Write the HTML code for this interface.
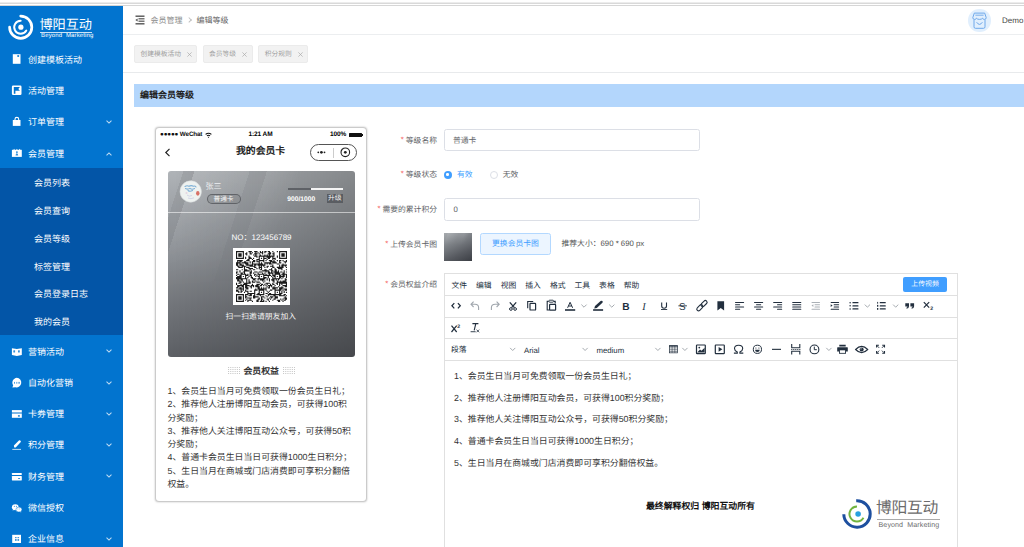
<!DOCTYPE html>
<html lang="zh-CN"><head><meta charset="utf-8">
<style>
*{margin:0;padding:0;box-sizing:border-box}
html,body{width:1024px;height:547px;overflow:hidden;background:#fff;font-family:"Liberation Sans",sans-serif;color:#333;text-rendering:geometricPrecision}
.a{position:absolute}
.top{position:absolute;left:0;top:0;width:1024px;height:6px;background:#fff}
.top .l1{position:absolute;left:0;top:2px;width:1024px;height:1px;background:#ececec}
.top .l2{position:absolute;left:0;top:3px;width:1024px;height:1px;background:#d9d9d9}
.top .l3{position:absolute;left:0;top:5px;width:1024px;height:1px;background:#d6d6d6}
.side{position:absolute;left:0;top:6px;width:123px;height:541px;background:#0274cf;color:#fff}
.mi{position:absolute;left:0;width:123px;height:31.3px;font-size:9px;line-height:31.3px}
.mi .t{position:absolute;left:28px;top:0}
.mi .ic{position:absolute;left:12px}
.mi .ch{position:absolute;left:106.5px;top:11.8px;width:4px;height:4px;border-right:1px solid rgba(255,255,255,.75);border-bottom:1px solid rgba(255,255,255,.75);transform:rotate(45deg)}
.mi .ch.up{transform:rotate(-135deg);top:14px}
.sub{position:absolute;left:0;top:162.2px;width:123px;height:166.8px;background:#0355a7}
.si{position:absolute;left:34px;margin-top:2px;font-size:9px;line-height:27.8px;height:27.8px}
.hdr{position:absolute;left:123px;top:6px;width:901px;height:29px;border-bottom:1px solid #eceef0}
.tags{position:absolute;left:123px;top:35px;width:901px;height:38px;border-bottom:1px solid #e8eaec}
.tag{position:absolute;top:10px;height:18px;background:#f2f2f2;border:1px solid #ebebeb;border-radius:2px;color:#9d9d9d;font-size:6.75px;line-height:16px}
.tag .x{position:absolute}
.title{position:absolute;left:134px;top:84px;width:890px;height:22.5px;background:#b3d6fc;font-size:9px;font-weight:bold;line-height:22.5px;padding-left:6px;color:#222}
.phone{position:absolute;left:156px;top:128px;width:210px;height:373px;background:#fff;border-radius:3px;box-shadow:0 0 2px 0.5px rgba(0,0,0,.28)}
.card{position:absolute;left:11.5px;top:42.5px;width:187.2px;height:186px;border-radius:3px;overflow:hidden;background:linear-gradient(to right,rgba(0,0,0,0) 0%,rgba(0,0,0,.24) 100%),linear-gradient(to bottom,#b0b4b8 0%,#8f9398 40%,#74777c 70%,#5c5f64 100%)}
.dots{width:11.5px;height:8px;background-image:radial-gradient(circle,#c8c8c8 0.5px,transparent 0.6px);background-size:2px 2px}
.lbl{position:absolute;right:587px;font-size:7.8px;line-height:9.5px;color:#606266;white-space:nowrap}
.lbl i{font-style:normal;color:#f56c6c;margin-right:2px;position:relative;top:-1px}
.inp{position:absolute;left:444.4px;width:255.6px;border:0.8px solid #dcdfe6;border-radius:2.5px;background:#fff}
.inp span{position:absolute;top:50%;transform:translateY(-42%);font-size:7.8px;line-height:9.5px;color:#606266}
.ed{position:absolute;left:444.3px;top:273.3px;width:514px;height:280px;border:0.8px solid #e0e0e0;background:#fff}
</style></head>
<body>
<div class="top"><div class="l1"></div><div class="l2"></div><div class="l3"></div></div>

<div class="side">
  <!-- logo -->
  <svg class="a" style="left:6px;top:6px" width="30" height="30" viewBox="0 0 30 30">
    <path d="M14.7 4.1 A11.1 11.1 0 1 1 3.6 15.2" fill="none" stroke="#fff" stroke-width="2.7" stroke-linecap="round"/>
    <path d="M14.7 8.7 A6.5 6.5 0 1 0 20.33 18.45" fill="none" stroke="#fff" stroke-width="1.9" stroke-linecap="round"/>
    <circle cx="14.9" cy="15.2" r="2.6" fill="#fff"/>
  </svg>
  <div class="a" style="left:39.5px;top:10.5px;font-size:13.2px;line-height:16px;letter-spacing:-0.1px;font-weight:300">博阳互动</div>
  <div class="a" style="left:40px;top:26px;width:52px;height:1px;background:rgba(255,255,255,.8)"></div>
  <div class="a" style="left:41px;top:27px;font-size:6px;line-height:7px;letter-spacing:0.15px">Beyond&nbsp; Marketing</div>

  <div class="mi" style="top:38.6px"><span class="t">创建模板活动</span></div>
  <div class="mi" style="top:69.9px"><span class="t">活动管理</span></div>
  <div class="mi" style="top:101.2px"><span class="t">订单管理</span><span class="ch"></span></div>
  <div class="mi" style="top:132.5px"><span class="t">会员管理</span><span class="ch up"></span></div>
  <div class="sub">
    <div class="si" style="top:0">会员列表</div>
    <div class="si" style="top:27.8px">会员查询</div>
    <div class="si" style="top:55.6px">会员等级</div>
    <div class="si" style="top:83.4px">标签管理</div>
    <div class="si" style="top:111.2px">会员登录日志</div>
    <div class="si" style="top:139px">我的会员</div>
  </div>
  <div class="mi" style="top:330.5px"><span class="t">营销活动</span><span class="ch"></span></div>
  <div class="mi" style="top:361.77px"><span class="t">自动化营销</span><span class="ch"></span></div>
  <div class="mi" style="top:393.04px"><span class="t">卡券管理</span><span class="ch"></span></div>
  <div class="mi" style="top:424.31px"><span class="t">积分管理</span><span class="ch"></span></div>
  <div class="mi" style="top:455.58px"><span class="t">财务管理</span><span class="ch"></span></div>
  <div class="mi" style="top:486.85px"><span class="t">微信授权</span></div>
  <div class="mi" style="top:518.12px"><span class="t">企业信息</span><span class="ch"></span></div>
</div>

<svg class="a" style="left:0;top:0" width="30" height="547" viewBox="0 0 30 547">
<rect x="12.8" y="54.2" width="7.7" height="9.6" fill="#fff"/><rect x="17.3" y="54.9" width="1.8" height="2.1" rx="0.6" fill="#0274cf" opacity=".85"/>
<rect x="11.9" y="85.6" width="9.6" height="9.4" rx="1.2" fill="#fff"/><path d="M13.8 87.1 H19.9 L18.3 88.9 L19.9 90.7 H15.4 V93.8 H13.8 Z" fill="#0274cf"/>
<rect x="12.8" y="120" width="7.7" height="5.9" fill="#fff"/><path d="M15 120.2 V119.2 Q15 117.4 16.85 117.4 Q18.7 117.4 18.7 119.2 V120.2" fill="none" stroke="#fff" stroke-width="1.1"/>
<rect x="11.9" y="149.8" width="9.9" height="7.1" fill="#fff"/><path d="M13.4 150 L14.1 148.8 L14.8 150 M16.2 150 L16.9 148.8 L17.6 150 M19 150 L19.7 148.8 L20.4 150" fill="#fff"/><path d="M15.6 155.4 Q15.6 153.4 16.9 153.2 Q15.9 152.8 15.9 152 Q15.9 151.2 16.9 151.2 Q17.9 151.2 17.9 152 Q17.9 152.8 16.9 153.2 Q18.2 153.4 18.2 155.4 Z" fill="#0274cf" opacity=".8"/>
<path d="M11.9 348.2 L16.85 349 L21.8 348.2 V355.1 L16.85 355.9 L11.9 355.1 Z" fill="#fff"/><rect x="13.3" y="350.2" width="1.8" height="2.3" rx="0.5" fill="#0274cf" opacity=".8"/><rect x="18" y="350.2" width="1.8" height="2.3" rx="0.5" fill="#0274cf" opacity=".8"/>
<path d="M16.85 377.8 A4.9 4.8 0 1 1 15.5 387.3 L12.4 387.5 L13.2 385.3 A4.9 4.8 0 0 1 16.85 377.8 Z" fill="#fff"/><rect x="14" y="381.9" width="1" height="1.8" fill="#0274cf" opacity=".7"/><rect x="16.3" y="381.9" width="1" height="1.8" fill="#0274cf" opacity=".7"/><rect x="18.4" y="381.9" width="1.4" height="1.8" fill="#0274cf" opacity=".7"/>
<rect x="11.9" y="410.1" width="9.9" height="2.1" fill="#fff"/><rect x="11.9" y="412.2" width="9.9" height="1.6" fill="#fff" opacity=".45"/><rect x="11.9" y="413.8" width="9.9" height="4" fill="#fff"/><rect x="17.9" y="415" width="2" height="1.8" rx="0.6" fill="#0274cf" opacity=".8"/>
<path d="M14.2 447.6 L13.9 445.6 L18.9 440.6 Q19.6 440 20.2 440.6 L20.7 441.1 Q21.2 441.7 20.6 442.3 L15.7 447.4 Z" fill="#fff"/><rect x="12.3" y="448.9" width="8.7" height="0.9" fill="#fff" opacity=".85"/>
<rect x="11.9" y="473" width="9.9" height="2" rx="0.4" fill="#fff"/><rect x="11.9" y="476" width="9.9" height="4.5" rx="0.4" fill="#fff"/><rect x="18" y="477.9" width="2.2" height="1.2" rx="0.6" fill="#0274cf" opacity=".8"/>
<ellipse cx="15.3" cy="507.2" rx="3.4" ry="3" fill="#fff"/><path d="M13.2 509.2 L12.6 510.6 L14.6 509.8 Z" fill="#fff"/><ellipse cx="18.9" cy="509.6" rx="3" ry="2.5" fill="#fff" stroke="#0274cf" stroke-width="0.5"/><path d="M20.6 511.4 L21.3 512.4 L19.6 511.8 Z" fill="#fff"/><circle cx="14.3" cy="506.2" r="0.5" fill="#0274cf"/><circle cx="16.4" cy="506.2" r="0.5" fill="#0274cf"/><circle cx="17.9" cy="508.9" r="0.45" fill="#0274cf"/><circle cx="19.8" cy="508.9" r="0.45" fill="#0274cf"/>
<rect x="12.2" y="534.8" width="8.8" height="8.2" fill="#fff"/><g fill="#0274cf" opacity=".75"><rect x="15" y="537" width="1.6" height="1.1"/><rect x="17.5" y="537" width="1.6" height="1.1"/><rect x="15" y="538.9" width="1.6" height="2"/><rect x="17.5" y="538.9" width="1.6" height="2"/></g>
</svg>
<div class="hdr">
  <svg class="a" style="left:12px;top:8.5px" width="10" height="10" viewBox="0 0 10 10">
    <rect x="0.5" y="0.5" width="9" height="1.4" fill="#555"/>
    <rect x="3.5" y="3.2" width="6" height="1.2" fill="#555"/>
    <rect x="3.5" y="5.6" width="6" height="1.2" fill="#555"/>
    <rect x="0.5" y="8.1" width="9" height="1.4" fill="#555"/>
    <path d="M0.3 5 L2.6 3.4 L2.6 6.6 Z" fill="#555"/>
  </svg>
  <div class="a" style="left:27.5px;top:9.7px;font-size:8px;line-height:10px;color:#8a8a8a">会员管理</div>
  <div class="a" style="left:63.5px;top:11.6px;width:4.2px;height:4.2px;border-right:0.9px solid #c0c0c0;border-top:0.9px solid #c0c0c0;transform:rotate(45deg)"></div>
  <div class="a" style="left:73.5px;top:9.7px;font-size:8px;line-height:10px;color:#606060">编辑等级</div>
  <div class="a" style="left:845px;top:3px;width:22.5px;height:22.5px;border-radius:50%;background:#e1effd"></div>
  <svg class="a" style="left:849px;top:5.5px" width="15" height="17" viewBox="0 0 15 17">
    <path d="M2.3 1.1 H12.7 L14.2 5.6 Q14.2 7.4 12.5 7.4 Q10.8 7.4 10.4 6.2 Q9.8 7.4 7.5 7.4 Q5.2 7.4 4.6 6.2 Q4.2 7.4 2.5 7.4 Q0.8 7.4 0.8 5.6 Z" fill="none" stroke="#6ea8ea" stroke-width="1"/>
    <path d="M3.4 3.2 H11.6" stroke="#6ea8ea" stroke-width="0.9"/>
    <path d="M2 7.6 V14.8 Q2 16.3 3.4 16.3 H11.6 Q13 16.3 13 14.8 V7.6" fill="none" stroke="#6ea8ea" stroke-width="1"/>
    <path d="M4.6 10.2 Q7.5 14.6 10.4 10.2" fill="none" stroke="#6ea8ea" stroke-width="1"/>
  </svg>
  <div class="a" style="left:879px;top:9.8px;font-size:8px;line-height:10px;color:#444">Demo</div>
</div>
<div class="tags">
  <div class="tag" style="left:11px;width:63px"><span class="a" style="left:5.4px;top:1.2px">创建模板活动</span><svg class="x" style="left:52.3px;top:5.6px" width="5" height="5" viewBox="0 0 5 5"><path d="M0.4 0.4 L4.6 4.6 M4.6 0.4 L0.4 4.6" stroke="#aaa" stroke-width="0.7"/></svg></div>
  <div class="tag" style="left:79.7px;width:50.5px"><span class="a" style="left:5.4px;top:1.2px">会员等级</span><svg class="x" style="left:38.8px;top:5.6px" width="5" height="5" viewBox="0 0 5 5"><path d="M0.4 0.4 L4.6 4.6 M4.6 0.4 L0.4 4.6" stroke="#aaa" stroke-width="0.7"/></svg></div>
  <div class="tag" style="left:135.4px;width:50px"><span class="a" style="left:5.4px;top:1.2px">积分规则</span><svg class="x" style="left:38.6px;top:5.6px" width="5" height="5" viewBox="0 0 5 5"><path d="M0.4 0.4 L4.6 4.6 M4.6 0.4 L0.4 4.6" stroke="#aaa" stroke-width="0.7"/></svg></div>
</div>
<div class="title">编辑会员等级</div>

<div class="phone">
  <div class="a" style="left:4px;top:3px;font-size:6.3px;line-height:8px;color:#111;letter-spacing:-0.15px;font-weight:bold">●●●●● WeChat</div>
  <svg class="a" style="left:49px;top:4px" width="7" height="6" viewBox="0 0 7 6"><path d="M0.2 2 Q3.5 -0.6 6.8 2 L6 2.8 Q3.5 0.8 1 2.8Z M1.6 3.4 Q3.5 1.9 5.4 3.4 L4.6 4.2 Q3.5 3.3 2.4 4.2Z M3.5 6 L2.8 5 Q3.5 4.4 4.2 5Z" fill="#111"/></svg>
  <div class="a" style="left:92.5px;top:3px;font-size:6.5px;line-height:8px;color:#000;font-weight:bold;letter-spacing:-0.1px">1:21 AM</div>
  <div class="a" style="left:174px;top:3px;font-size:6.5px;line-height:8px;color:#000;font-weight:bold;letter-spacing:-0.1px">100%</div>
  <div class="a" style="left:193px;top:4.5px;width:13px;height:4.5px;background:#111;border-radius:0.5px"></div>
  <div class="a" style="left:206.3px;top:5.8px;width:0.8px;height:2px;background:#111"></div>
  <svg class="a" style="left:8px;top:20px" width="7" height="9" viewBox="0 0 7 9"><path d="M5.5 0.8 L1.8 4.5 L5.5 8.2" fill="none" stroke="#222" stroke-width="1.2"/></svg>
  <div class="a" style="left:80px;top:18px;font-size:9.9px;line-height:12px;color:#222;font-weight:bold;letter-spacing:-0.05px">我的会员卡</div>
  <div class="a" style="left:154px;top:16px;width:47px;height:16.5px;border:0.8px solid #555;border-radius:9px"></div>
  <div class="a" style="left:177.3px;top:19.5px;width:0.6px;height:10px;background:#ccc"></div>
  <svg class="a" style="left:154px;top:16px" width="47" height="17" viewBox="0 0 47 17">
  <circle cx="8.3" cy="8.3" r="0.9" fill="#222"/><circle cx="11.4" cy="8.3" r="1.35" fill="#222"/><circle cx="14.5" cy="8.3" r="0.9" fill="#222"/>
  <circle cx="35.3" cy="8.3" r="4.3" fill="none" stroke="#222" stroke-width="1.1"/><circle cx="35.3" cy="8.3" r="1.4" fill="#222"/>
</svg>

  <div class="card">
    <div class="a" style="left:0;top:0;width:100%;height:100%;background:linear-gradient(108deg,rgba(255,255,255,0) 0%,rgba(255,255,255,0) 6.2%,rgba(0,0,0,.07) 6.2%,rgba(0,0,0,.07) 10.7%,rgba(255,255,255,.10) 10.7%,rgba(255,255,255,.06) 33%,rgba(0,0,0,.02) 33%,rgba(0,0,0,.02) 40%,rgba(255,255,255,.07) 40%,rgba(255,255,255,0) 55%);-webkit-mask-image:linear-gradient(to bottom,#000 0%,rgba(0,0,0,.5) 35%,rgba(0,0,0,0) 65%)"></div>
    <svg class="a" style="left:11px;top:9.5px" width="24" height="24" viewBox="0 0 24 24">
  <circle cx="11.7" cy="11.5" r="10.7" fill="#eef2f0" stroke="#d9dcde" stroke-width="0.6"/>
  <path d="M6 6.5 Q8 5.2 10 6.3 Q12 5 14.5 6.2 Q16 5.5 17 7 M6.5 8.5 Q9 9.8 11 8.4 Q13 10 15.5 8.6 M9 10.5 Q11 12 13.5 10.6" fill="none" stroke="#7eb0d6" stroke-width="1.1" stroke-linecap="round"/>
  <ellipse cx="18.8" cy="13.3" rx="1.7" ry="2.4" fill="#d35b4e" opacity=".85"/>
  <path d="M8 15 Q10 17 13 15.5 M9 18 Q12 19.5 15 17.8" fill="none" stroke="#cfd3e6" stroke-width="0.9"/>
  <circle cx="7.5" cy="13" r="1" fill="#e3c8d8" opacity=".7"/>
</svg>
<div class="a" style="left:38px;top:11.5px;font-size:8px;line-height:9px;color:#eef0f2">张三</div>
    <div class="a" style="left:39px;top:23.4px;width:34px;height:10.6px;border-radius:6px;background:rgba(0,0,0,.07);border:0.9px solid rgba(80,83,88,.75);font-size:6.6px;line-height:9px;color:#f5f5f5;text-align:center">普通卡</div>
    <div class="a" style="left:120.5px;top:17px;width:23px;height:2px;background:#5e6166"></div>
    <div class="a" style="left:143.5px;top:17px;width:32px;height:2px;background:#f4f4f4"></div>
    <div class="a" style="left:119.8px;top:25px;font-size:6.7px;line-height:8px;color:#fff;font-weight:bold">900/1000</div>
    <div class="a" style="left:159px;top:23.3px;width:16.5px;height:9.7px;background:#5a5d62;font-size:6.8px;line-height:9.7px;color:#f5f5f5;text-align:center">升级</div>
    <div class="a" style="left:0;top:41.5px;width:100%;height:0.8px;background:rgba(255,255,255,.55)"></div>
    <div class="a" style="left:64px;top:62px;font-size:8px;line-height:9px;color:#fff">NO：123456789</div>
    <div class="a" style="left:65.2px;top:77.7px;width:57px;height:57px;background:#fff"></div>
    <svg class="a" style="left:68.2px;top:80.7px" width="51" height="51" viewBox="0 0 45 45"><path d="M0 0h7v1h-7zM11 0h3v1h-3zM16 0h3v1h-3zM21 0h1v1h-1zM23 0h1v1h-1zM25 0h2v1h-2zM28 0h2v1h-2zM32 0h1v1h-1zM36 0h1v1h-1zM38 0h7v1h-7zM0 1h1v1h-1zM6 1h1v1h-1zM9 1h1v1h-1zM12 1h1v1h-1zM14 1h1v1h-1zM17 1h1v1h-1zM19 1h1v1h-1zM21 1h3v1h-3zM25 1h1v1h-1zM29 1h2v1h-2zM33 1h1v1h-1zM38 1h1v1h-1zM44 1h1v1h-1zM0 2h1v1h-1zM2 2h3v1h-3zM6 2h1v1h-1zM8 2h2v1h-2zM12 2h2v1h-2zM16 2h3v1h-3zM20 2h1v1h-1zM23 2h1v1h-1zM28 2h3v1h-3zM32 2h2v1h-2zM38 2h1v1h-1zM40 2h3v1h-3zM44 2h1v1h-1zM0 3h1v1h-1zM2 3h3v1h-3zM6 3h1v1h-1zM9 3h1v1h-1zM15 3h1v1h-1zM17 3h1v1h-1zM21 3h1v1h-1zM25 3h1v1h-1zM27 3h1v1h-1zM29 3h1v1h-1zM33 3h1v1h-1zM38 3h1v1h-1zM40 3h3v1h-3zM44 3h1v1h-1zM0 4h1v1h-1zM2 4h3v1h-3zM6 4h1v1h-1zM11 4h1v1h-1zM16 4h3v1h-3zM20 4h14v1h-14zM36 4h1v1h-1zM38 4h1v1h-1zM40 4h3v1h-3zM44 4h1v1h-1zM0 5h1v1h-1zM6 5h1v1h-1zM8 5h1v1h-1zM11 5h2v1h-2zM18 5h1v1h-1zM20 5h1v1h-1zM24 5h1v1h-1zM27 5h4v1h-4zM32 5h1v1h-1zM36 5h1v1h-1zM38 5h1v1h-1zM44 5h1v1h-1zM0 6h7v1h-7zM8 6h1v1h-1zM11 6h3v1h-3zM15 6h1v1h-1zM20 6h1v1h-1zM22 6h1v1h-1zM24 6h3v1h-3zM28 6h2v1h-2zM32 6h3v1h-3zM38 6h7v1h-7zM10 7h2v1h-2zM14 7h1v1h-1zM18 7h3v1h-3zM24 7h1v1h-1zM27 7h1v1h-1zM32 7h1v1h-1zM34 7h1v1h-1zM1 8h5v1h-5zM9 8h3v1h-3zM15 8h2v1h-2zM18 8h1v1h-1zM20 8h5v1h-5zM26 8h1v1h-1zM29 8h3v1h-3zM33 8h1v1h-1zM36 8h1v1h-1zM38 8h2v1h-2zM41 8h1v1h-1zM44 8h1v1h-1zM1 9h1v1h-1zM3 9h2v1h-2zM7 9h2v1h-2zM12 9h1v1h-1zM14 9h3v1h-3zM18 9h3v1h-3zM24 9h1v1h-1zM30 9h5v1h-5zM38 9h1v1h-1zM42 9h3v1h-3zM0 10h4v1h-4zM5 10h6v1h-6zM12 10h1v1h-1zM14 10h1v1h-1zM20 10h1v1h-1zM22 10h1v1h-1zM25 10h6v1h-6zM32 10h4v1h-4zM38 10h2v1h-2zM43 10h1v1h-1zM0 11h2v1h-2zM3 11h2v1h-2zM8 11h3v1h-3zM14 11h10v1h-10zM25 11h1v1h-1zM27 11h1v1h-1zM29 11h3v1h-3zM36 11h2v1h-2zM41 11h1v1h-1zM0 12h2v1h-2zM3 12h4v1h-4zM9 12h6v1h-6zM16 12h2v1h-2zM19 12h7v1h-7zM32 12h1v1h-1zM38 12h1v1h-1zM40 12h5v1h-5zM1 13h2v1h-2zM5 13h4v1h-4zM12 13h5v1h-5zM20 13h1v1h-1zM22 13h1v1h-1zM24 13h1v1h-1zM27 13h2v1h-2zM30 13h3v1h-3zM38 13h1v1h-1zM40 13h2v1h-2zM43 13h1v1h-1zM2 14h4v1h-4zM7 14h1v1h-1zM9 14h3v1h-3zM16 14h2v1h-2zM20 14h3v1h-3zM25 14h1v1h-1zM27 14h1v1h-1zM32 14h2v1h-2zM36 14h6v1h-6zM44 14h1v1h-1zM7 15h1v1h-1zM11 15h4v1h-4zM18 15h1v1h-1zM20 15h1v1h-1zM22 15h1v1h-1zM31 15h1v1h-1zM34 15h1v1h-1zM37 15h4v1h-4zM0 16h2v1h-2zM5 16h1v1h-1zM7 16h3v1h-3zM12 16h1v1h-1zM15 16h2v1h-2zM21 16h2v1h-2zM25 16h2v1h-2zM29 16h3v1h-3zM34 16h2v1h-2zM40 16h1v1h-1zM44 16h1v1h-1zM3 17h1v1h-1zM7 17h5v1h-5zM13 17h1v1h-1zM23 17h6v1h-6zM31 17h2v1h-2zM34 17h2v1h-2zM37 17h1v1h-1zM42 17h1v1h-1zM0 18h2v1h-2zM3 18h1v1h-1zM6 18h2v1h-2zM12 18h2v1h-2zM16 18h3v1h-3zM20 18h3v1h-3zM26 18h1v1h-1zM28 18h2v1h-2zM31 18h1v1h-1zM33 18h5v1h-5zM39 18h2v1h-2zM42 18h1v1h-1zM44 18h1v1h-1zM0 19h1v1h-1zM4 19h2v1h-2zM7 19h1v1h-1zM12 19h2v1h-2zM15 19h1v1h-1zM19 19h1v1h-1zM23 19h1v1h-1zM25 19h1v1h-1zM28 19h5v1h-5zM34 19h5v1h-5zM41 19h2v1h-2zM1 20h2v1h-2zM4 20h5v1h-5zM10 20h1v1h-1zM12 20h1v1h-1zM16 20h2v1h-2zM19 20h6v1h-6zM26 20h1v1h-1zM29 20h1v1h-1zM32 20h1v1h-1zM34 20h5v1h-5zM40 20h5v1h-5zM0 21h1v1h-1zM3 21h2v1h-2zM8 21h3v1h-3zM12 21h2v1h-2zM16 21h1v1h-1zM18 21h1v1h-1zM20 21h1v1h-1zM24 21h7v1h-7zM32 21h3v1h-3zM38 21h2v1h-2zM41 21h2v1h-2zM44 21h1v1h-1zM1 22h4v1h-4zM6 22h1v1h-1zM8 22h1v1h-1zM11 22h1v1h-1zM13 22h1v1h-1zM17 22h1v1h-1zM19 22h2v1h-2zM22 22h1v1h-1zM24 22h1v1h-1zM28 22h1v1h-1zM31 22h1v1h-1zM33 22h2v1h-2zM36 22h1v1h-1zM38 22h5v1h-5zM44 22h1v1h-1zM0 23h5v1h-5zM8 23h1v1h-1zM10 23h1v1h-1zM13 23h2v1h-2zM20 23h1v1h-1zM24 23h3v1h-3zM28 23h1v1h-1zM32 23h1v1h-1zM34 23h1v1h-1zM38 23h2v1h-2zM41 23h1v1h-1zM44 23h1v1h-1zM0 24h10v1h-10zM14 24h4v1h-4zM19 24h7v1h-7zM27 24h1v1h-1zM29 24h1v1h-1zM32 24h7v1h-7zM40 24h1v1h-1zM43 24h1v1h-1zM1 25h2v1h-2zM4 25h2v1h-2zM9 25h1v1h-1zM11 25h1v1h-1zM15 25h2v1h-2zM19 25h1v1h-1zM21 25h4v1h-4zM27 25h1v1h-1zM29 25h1v1h-1zM31 25h3v1h-3zM35 25h1v1h-1zM37 25h1v1h-1zM43 25h2v1h-2zM1 26h3v1h-3zM5 26h1v1h-1zM9 26h1v1h-1zM11 26h1v1h-1zM14 26h1v1h-1zM17 26h1v1h-1zM23 26h1v1h-1zM25 26h1v1h-1zM29 26h1v1h-1zM32 26h2v1h-2zM36 26h1v1h-1zM39 26h1v1h-1zM41 26h3v1h-3zM3 27h2v1h-2zM6 27h1v1h-1zM9 27h1v1h-1zM11 27h2v1h-2zM14 27h3v1h-3zM18 27h3v1h-3zM24 27h1v1h-1zM33 27h1v1h-1zM36 27h9v1h-9zM0 28h1v1h-1zM2 28h2v1h-2zM7 28h6v1h-6zM21 28h1v1h-1zM26 28h4v1h-4zM32 28h1v1h-1zM35 28h2v1h-2zM38 28h7v1h-7zM0 29h1v1h-1zM4 29h1v1h-1zM6 29h4v1h-4zM14 29h1v1h-1zM18 29h3v1h-3zM22 29h2v1h-2zM25 29h1v1h-1zM27 29h1v1h-1zM30 29h1v1h-1zM32 29h2v1h-2zM36 29h1v1h-1zM38 29h1v1h-1zM40 29h1v1h-1zM44 29h1v1h-1zM1 30h6v1h-6zM8 30h4v1h-4zM13 30h3v1h-3zM17 30h3v1h-3zM21 30h2v1h-2zM24 30h1v1h-1zM26 30h1v1h-1zM28 30h4v1h-4zM34 30h1v1h-1zM38 30h1v1h-1zM41 30h4v1h-4zM1 31h2v1h-2zM5 31h2v1h-2zM8 31h2v1h-2zM12 31h2v1h-2zM15 31h1v1h-1zM17 31h4v1h-4zM27 31h1v1h-1zM29 31h1v1h-1zM31 31h1v1h-1zM33 31h1v1h-1zM37 31h1v1h-1zM40 31h1v1h-1zM43 31h2v1h-2zM0 32h2v1h-2zM3 32h2v1h-2zM6 32h1v1h-1zM8 32h3v1h-3zM13 32h1v1h-1zM19 32h2v1h-2zM22 32h1v1h-1zM24 32h1v1h-1zM26 32h1v1h-1zM28 32h2v1h-2zM32 32h5v1h-5zM38 32h4v1h-4zM2 33h5v1h-5zM9 33h2v1h-2zM17 33h1v1h-1zM19 33h8v1h-8zM32 33h3v1h-3zM38 33h3v1h-3zM42 33h3v1h-3zM0 34h2v1h-2zM4 34h1v1h-1zM6 34h1v1h-1zM8 34h1v1h-1zM16 34h3v1h-3zM20 34h5v1h-5zM26 34h1v1h-1zM30 34h2v1h-2zM34 34h6v1h-6zM41 34h1v1h-1zM43 34h2v1h-2zM0 35h3v1h-3zM4 35h2v1h-2zM8 35h3v1h-3zM12 35h2v1h-2zM16 35h1v1h-1zM20 35h1v1h-1zM24 35h1v1h-1zM27 35h1v1h-1zM29 35h1v1h-1zM34 35h1v1h-1zM38 35h1v1h-1zM40 35h1v1h-1zM42 35h1v1h-1zM2 36h1v1h-1zM4 36h1v1h-1zM7 36h1v1h-1zM10 36h1v1h-1zM16 36h1v1h-1zM20 36h1v1h-1zM22 36h1v1h-1zM24 36h1v1h-1zM28 36h1v1h-1zM34 36h1v1h-1zM36 36h1v1h-1zM38 36h1v1h-1zM40 36h1v1h-1zM42 36h1v1h-1zM44 36h1v1h-1zM10 37h7v1h-7zM19 37h2v1h-2zM24 37h1v1h-1zM26 37h2v1h-2zM29 37h2v1h-2zM34 37h1v1h-1zM38 37h3v1h-3zM0 38h7v1h-7zM8 38h3v1h-3zM12 38h2v1h-2zM16 38h1v1h-1zM18 38h7v1h-7zM28 38h12v1h-12zM42 38h2v1h-2zM0 39h1v1h-1zM6 39h1v1h-1zM8 39h1v1h-1zM11 39h3v1h-3zM15 39h2v1h-2zM21 39h1v1h-1zM26 39h1v1h-1zM28 39h1v1h-1zM33 39h2v1h-2zM38 39h5v1h-5zM44 39h1v1h-1zM0 40h1v1h-1zM2 40h3v1h-3zM6 40h1v1h-1zM8 40h2v1h-2zM15 40h5v1h-5zM22 40h3v1h-3zM27 40h1v1h-1zM30 40h3v1h-3zM34 40h3v1h-3zM43 40h1v1h-1zM0 41h1v1h-1zM2 41h3v1h-3zM6 41h1v1h-1zM8 41h1v1h-1zM10 41h4v1h-4zM15 41h2v1h-2zM20 41h1v1h-1zM22 41h1v1h-1zM25 41h1v1h-1zM29 41h1v1h-1zM31 41h1v1h-1zM34 41h3v1h-3zM42 41h3v1h-3zM0 42h1v1h-1zM2 42h3v1h-3zM6 42h1v1h-1zM9 42h1v1h-1zM12 42h1v1h-1zM19 42h2v1h-2zM22 42h2v1h-2zM27 42h2v1h-2zM30 42h1v1h-1zM33 42h2v1h-2zM39 42h1v1h-1zM41 42h1v1h-1zM43 42h2v1h-2zM0 43h1v1h-1zM6 43h1v1h-1zM8 43h1v1h-1zM10 43h4v1h-4zM18 43h2v1h-2zM22 43h1v1h-1zM24 43h1v1h-1zM28 43h1v1h-1zM32 43h1v1h-1zM36 43h3v1h-3zM40 43h1v1h-1zM42 43h2v1h-2zM0 44h7v1h-7zM10 44h1v1h-1zM14 44h1v1h-1zM18 44h2v1h-2zM21 44h4v1h-4zM26 44h1v1h-1zM29 44h1v1h-1zM37 44h2v1h-2zM41 44h1v1h-1z" fill="#1a1a1a"/></svg>
    <div class="a" style="left:58px;top:141.3px;font-size:7.8px;line-height:9px;color:#f3f3f3;letter-spacing:0.05px">扫一扫邀请朋友加入</div>
  </div>
  <svg class="a" style="left:72px;top:239px" width="12" height="8" viewBox="0 0 12 8"><rect x="0.0" y="0" width="1.1" height="1" fill="#c9c9c9"/><rect x="0.0" y="2" width="1.1" height="1" fill="#c9c9c9"/><rect x="0.0" y="4" width="1.1" height="1" fill="#c9c9c9"/><rect x="0.0" y="6" width="1.1" height="1" fill="#c9c9c9"/><rect x="2.2" y="0" width="1.1" height="1" fill="#c9c9c9"/><rect x="2.2" y="2" width="1.1" height="1" fill="#c9c9c9"/><rect x="2.2" y="4" width="1.1" height="1" fill="#c9c9c9"/><rect x="2.2" y="6" width="1.1" height="1" fill="#c9c9c9"/><rect x="4.4" y="0" width="1.1" height="1" fill="#c9c9c9"/><rect x="4.4" y="2" width="1.1" height="1" fill="#c9c9c9"/><rect x="4.4" y="4" width="1.1" height="1" fill="#c9c9c9"/><rect x="4.4" y="6" width="1.1" height="1" fill="#c9c9c9"/><rect x="6.6000000000000005" y="0" width="1.1" height="1" fill="#c9c9c9"/><rect x="6.6000000000000005" y="2" width="1.1" height="1" fill="#c9c9c9"/><rect x="6.6000000000000005" y="4" width="1.1" height="1" fill="#c9c9c9"/><rect x="6.6000000000000005" y="6" width="1.1" height="1" fill="#c9c9c9"/><rect x="8.8" y="0" width="1.1" height="1" fill="#c9c9c9"/><rect x="8.8" y="2" width="1.1" height="1" fill="#c9c9c9"/><rect x="8.8" y="4" width="1.1" height="1" fill="#c9c9c9"/><rect x="8.8" y="6" width="1.1" height="1" fill="#c9c9c9"/><rect x="11.0" y="0" width="1.1" height="1" fill="#c9c9c9"/><rect x="11.0" y="2" width="1.1" height="1" fill="#c9c9c9"/><rect x="11.0" y="4" width="1.1" height="1" fill="#c9c9c9"/><rect x="11.0" y="6" width="1.1" height="1" fill="#c9c9c9"/></svg>
  <div class="a" style="left:87.5px;top:237.5px;font-size:8.9px;line-height:10px;color:#333;font-weight:bold">会员权益</div>
  <svg class="a" style="left:127px;top:239px" width="12" height="8" viewBox="0 0 12 8"><rect x="0.0" y="0" width="1.1" height="1" fill="#c9c9c9"/><rect x="0.0" y="2" width="1.1" height="1" fill="#c9c9c9"/><rect x="0.0" y="4" width="1.1" height="1" fill="#c9c9c9"/><rect x="0.0" y="6" width="1.1" height="1" fill="#c9c9c9"/><rect x="2.2" y="0" width="1.1" height="1" fill="#c9c9c9"/><rect x="2.2" y="2" width="1.1" height="1" fill="#c9c9c9"/><rect x="2.2" y="4" width="1.1" height="1" fill="#c9c9c9"/><rect x="2.2" y="6" width="1.1" height="1" fill="#c9c9c9"/><rect x="4.4" y="0" width="1.1" height="1" fill="#c9c9c9"/><rect x="4.4" y="2" width="1.1" height="1" fill="#c9c9c9"/><rect x="4.4" y="4" width="1.1" height="1" fill="#c9c9c9"/><rect x="4.4" y="6" width="1.1" height="1" fill="#c9c9c9"/><rect x="6.6000000000000005" y="0" width="1.1" height="1" fill="#c9c9c9"/><rect x="6.6000000000000005" y="2" width="1.1" height="1" fill="#c9c9c9"/><rect x="6.6000000000000005" y="4" width="1.1" height="1" fill="#c9c9c9"/><rect x="6.6000000000000005" y="6" width="1.1" height="1" fill="#c9c9c9"/><rect x="8.8" y="0" width="1.1" height="1" fill="#c9c9c9"/><rect x="8.8" y="2" width="1.1" height="1" fill="#c9c9c9"/><rect x="8.8" y="4" width="1.1" height="1" fill="#c9c9c9"/><rect x="8.8" y="6" width="1.1" height="1" fill="#c9c9c9"/><rect x="11.0" y="0" width="1.1" height="1" fill="#c9c9c9"/><rect x="11.0" y="2" width="1.1" height="1" fill="#c9c9c9"/><rect x="11.0" y="4" width="1.1" height="1" fill="#c9c9c9"/><rect x="11.0" y="6" width="1.1" height="1" fill="#c9c9c9"/></svg>
  <div class="a" style="left:11.5px;top:257px;width:186px;font-size:8.9px;line-height:13.3px;color:#333">1、会员生日当月可免费领取一份会员生日礼；<br>2、推荐他人注册博阳互动会员，可获得100积分奖励；<br>3、推荐他人关注博阳互动公众号，可获得50积分奖励；<br>4、普通卡会员生日当日可获得1000生日积分；<br>5、生日当月在商城或门店消费即可享积分翻倍权益。</div>
</div>
<div class="lbl" style="top:135.5px"><i>*</i>等级名称</div>
<div class="inp" style="top:129.4px;height:21.5px"><span style="left:7.6px">普通卡</span></div>
<div class="lbl" style="top:170px"><i>*</i>等级状态</div>
<div class="a" style="left:443.7px;top:170.7px;width:8px;height:8px;border-radius:50%;background:#409eff"></div>
<div class="a" style="left:446.4px;top:173.4px;width:2.6px;height:2.6px;border-radius:50%;background:#fff"></div>
<div class="a" style="left:457px;top:170px;font-size:7.8px;line-height:9.5px;color:#409eff">有效</div>
<div class="a" style="left:489.5px;top:170.7px;width:8px;height:8px;border-radius:50%;border:0.8px solid #dcdfe6;background:#fff"></div>
<div class="a" style="left:502.7px;top:170px;font-size:7.8px;line-height:9.5px;color:#606266">无效</div>
<div class="lbl" style="top:204.8px"><i>*</i>需要的累计积分</div>
<div class="inp" style="top:198.4px;height:22.2px"><span style="left:8px">0</span></div>
<div class="lbl" style="top:239.6px"><i>*</i>上传会员卡图</div>
<div class="a" style="left:444px;top:232.8px;width:28px;height:27.8px;background:linear-gradient(155deg,#a8acb0 0%,#7d8186 35%,#575a60 70%,#3b3e44 100%)"></div>
<div class="a" style="left:444px;top:232.8px;width:28px;height:27.8px;background:linear-gradient(108deg,rgba(255,255,255,0) 8%,rgba(255,255,255,.10) 12%,rgba(255,255,255,.04) 40%,rgba(255,255,255,.10) 55%,rgba(255,255,255,0) 70%);-webkit-mask-image:linear-gradient(to bottom,#000 0%,rgba(0,0,0,0) 45%)"></div>
<div class="a" style="left:480.3px;top:232.7px;width:70.3px;height:22px;border:0.8px solid #b3d8ff;background:#ecf5ff;border-radius:2.5px;color:#409eff;font-size:7.8px;line-height:20.5px;text-align:center">更换会员卡图</div>
<div class="a" style="left:561.5px;top:239px;font-size:7.8px;line-height:9.5px;color:#555">推荐大小：690 * 690 px</div>
<div class="lbl" style="top:279.5px"><i>*</i>会员权益介绍</div>

<div class="ed">
<div class="a" style="left:6.1px;top:6.6px;font-size:7.8px;line-height:9.5px;color:#222f3e">文件</div>
<div class="a" style="left:30.72px;top:6.6px;font-size:7.8px;line-height:9.5px;color:#222f3e">编辑</div>
<div class="a" style="left:55.34px;top:6.6px;font-size:7.8px;line-height:9.5px;color:#222f3e">视图</div>
<div class="a" style="left:79.96px;top:6.6px;font-size:7.8px;line-height:9.5px;color:#222f3e">插入</div>
<div class="a" style="left:104.58px;top:6.6px;font-size:7.8px;line-height:9.5px;color:#222f3e">格式</div>
<div class="a" style="left:129.2px;top:6.6px;font-size:7.8px;line-height:9.5px;color:#222f3e">工具</div>
<div class="a" style="left:153.82px;top:6.6px;font-size:7.8px;line-height:9.5px;color:#222f3e">表格</div>
<div class="a" style="left:178.44px;top:6.6px;font-size:7.8px;line-height:9.5px;color:#222f3e">帮助</div>
<div class="a" style="left:457.5px;top:2.8px;width:44.6px;height:15.3px;background:#409eff;border-radius:2px;color:#fff;font-size:6.9px;line-height:15.3px;text-align:center">上传视频</div>
<div class="a" style="left:0;top:20.6px;width:100%;height:0.8px;background:#e0e0e0"></div>
<div class="a" style="left:0;top:42.5px;width:100%;height:0.8px;background:#e0e0e0"></div>
<div class="a" style="left:0;top:64px;width:100%;height:0.8px;background:#e0e0e0"></div>
<div class="a" style="left:0;top:86px;width:100%;height:0.8px;background:#e0e0e0"></div>
</div>
<svg class="a" style="left:444px;top:295px" width="516" height="66" viewBox="444 295 516 66"><path d="M454.3 303.1 L451.9 305.75 L454.3 308.4 M457.9 303.1 L460.3 305.75 L457.9 308.4" fill="none" stroke="#222f3e" stroke-width="1.25"/><path d="M473.6 301.6 L471 304.3 L473.6 307 M471.2 304.3 H475 Q478.6 304.3 478.6 307.6 V310" fill="none" stroke="#a0a6ad" stroke-width="1.1"/><path d="M496.6 301.6 L499.2 304.3 L496.6 307 M499 304.3 H495.2 Q491.4 304.3 491.4 307.6 V310" fill="none" stroke="#a0a6ad" stroke-width="1.1"/><path d="M509.8 302.4 L514.4 307.6 M516.2 302.4 L511.6 307.6" fill="none" stroke="#222f3e" stroke-width="1.3"/><circle cx="510.9" cy="309" r="1.35" fill="none" stroke="#222f3e" stroke-width="1"/><circle cx="515.1" cy="309" r="1.35" fill="none" stroke="#222f3e" stroke-width="1"/><path d="M527.7 308.2 V301.5 H533.2" fill="none" stroke="#222f3e" stroke-width="1.1"/><rect x="530" y="303.4" width="5.6" height="6.6" rx="0.6" fill="none" stroke="#222f3e" stroke-width="1.2"/><path d="M548.6 301.4 H547.2 V310 H549.4 M553.8 301.4 H555.2 V303.6" fill="none" stroke="#222f3e" stroke-width="1.1"/><rect x="549" y="300.2" width="4.4" height="2" rx="0.5" fill="none" stroke="#222f3e" stroke-width="0.9"/><rect x="549.6" y="304.4" width="6" height="5.8" rx="0.5" fill="none" stroke="#222f3e" stroke-width="1.2"/><path d="M567.6 307.8 L570.1 302.3 L572.6 307.8 M568.6 306 H571.6" fill="none" stroke="#222f3e" stroke-width="1"/><rect x="565" y="309.2" width="10.2" height="1.6" fill="#222f3e"/><path d="M581.4 304.6 L584.0 307.20000000000005 L586.6 304.6" fill="none" stroke="#8f959c" stroke-width="0.8"/><path d="M594.2 308.4 L595 306 L600.6 300.9 Q601.6 300.3 602.4 301.1 Q603.1 301.9 602.4 302.8 L596.8 308 Z" fill="#222f3e"/><rect x="593.1" y="309.2" width="10" height="1.6" fill="#222f3e"/><path d="M609.1999999999999 304.6 L611.8 307.20000000000005 L614.4 304.6" fill="none" stroke="#8f959c" stroke-width="0.8"/><text x="622.3" y="309.7" font-family="Liberation Sans" font-weight="bold" font-size="10.2" fill="#222f3e">B</text><text x="642.2" y="309.7" font-family="Liberation Serif" font-style="italic" font-size="10.2" fill="#222f3e">I</text><path d="M661.7 302.4 V306 Q661.7 308.2 664.1 308.2 Q666.5 308.2 666.5 306 V302.4" fill="none" stroke="#222f3e" stroke-width="1.1"/><rect x="661" y="309" width="6.2" height="0.9" fill="#222f3e"/><text x="679" y="309.7" font-family="Liberation Sans" font-size="10" fill="#222f3e">S</text><rect x="678.4" y="305.4" width="8.5" height="0.9" fill="#222f3e"/><g transform="rotate(-45 701.95 305.65)" fill="none" stroke="#222f3e" stroke-width="1.1"><rect x="695.4" y="303.9" width="7.2" height="3.5" rx="1.75"/><rect x="701.3" y="303.9" width="7.2" height="3.5" rx="1.75"/></g><path d="M717.4 301.2 H724.1 V310.5 L720.75 307.9 L717.4 310.5 Z" fill="#222f3e"/><rect x="735" y="301.9" width="9.1" height="1" rx="0.5" fill="#222f3e"/><rect x="735" y="304.2" width="5.2" height="1" rx="0.5" fill="#222f3e"/><rect x="735" y="306.5" width="9.1" height="1" rx="0.5" fill="#222f3e"/><rect x="735" y="308.8" width="5.2" height="1" rx="0.5" fill="#222f3e"/><rect x="754" y="301.9" width="9.2" height="1" rx="0.5" fill="#222f3e"/><rect x="756" y="304.2" width="5.2" height="1" rx="0.5" fill="#222f3e"/><rect x="754" y="306.5" width="9.2" height="1" rx="0.5" fill="#222f3e"/><rect x="756" y="308.8" width="5.2" height="1" rx="0.5" fill="#222f3e"/><rect x="773.1" y="301.9" width="9.1" height="1" rx="0.5" fill="#222f3e"/><rect x="777" y="304.2" width="5.2" height="1" rx="0.5" fill="#222f3e"/><rect x="773.1" y="306.5" width="9.1" height="1" rx="0.5" fill="#222f3e"/><rect x="777" y="308.8" width="5.2" height="1" rx="0.5" fill="#222f3e"/><rect x="792.2" y="301.9" width="9.1" height="1" rx="0.5" fill="#222f3e"/><rect x="792.2" y="304.2" width="9.1" height="1" rx="0.5" fill="#222f3e"/><rect x="792.2" y="306.5" width="9.1" height="1" rx="0.5" fill="#222f3e"/><rect x="792.2" y="308.8" width="9.1" height="1" rx="0.5" fill="#222f3e"/><rect x="811.5" y="301.9" width="8.5" height="1" rx="0.5" fill="#aab0b6"/><rect x="814.5" y="304.2" width="5.5" height="1" rx="0.5" fill="#aab0b6"/><rect x="814.5" y="306.5" width="5.5" height="1" rx="0.5" fill="#aab0b6"/><rect x="811.5" y="308.8" width="8.5" height="1" rx="0.5" fill="#aab0b6"/><path d="M811.5 305.6 L813.4 304.3 V306.9 Z" fill="#aab0b6"/><rect x="830.6" y="301.9" width="8.5" height="1" rx="0.5" fill="#222f3e"/><rect x="833.6" y="304.2" width="5.5" height="1" rx="0.5" fill="#222f3e"/><rect x="833.6" y="306.5" width="5.5" height="1" rx="0.5" fill="#222f3e"/><rect x="830.6" y="308.8" width="8.5" height="1" rx="0.5" fill="#222f3e"/><path d="M832.6 305.6 L830.7 304.3 V306.9 Z" fill="#222f3e"/><circle cx="850.1" cy="302.70000000000005" r="0.75" fill="#222f3e"/><circle cx="850.1" cy="305.8" r="0.75" fill="#222f3e"/><circle cx="850.1" cy="308.90000000000003" r="0.75" fill="#222f3e"/><rect x="852.4" y="302.1" width="6.1" height="1.2" rx="0.5" fill="#222f3e"/><rect x="852.4" y="305.2" width="6.1" height="1.2" rx="0.5" fill="#222f3e"/><rect x="852.4" y="308.3" width="6.1" height="1.2" rx="0.5" fill="#222f3e"/><path d="M864.8 304.6 L867.4 307.20000000000005 L870.0 304.6" fill="none" stroke="#8f959c" stroke-width="0.8"/><rect x="877.2" y="301.9" width="0.9" height="1.8" fill="#222f3e"/><rect x="877" y="304.9" width="1.3" height="1.8" fill="#222f3e"/><rect x="877" y="308" width="1.3" height="1.8" fill="#222f3e"/><rect x="879.7" y="302.1" width="6.1" height="1.2" rx="0.5" fill="#222f3e"/><rect x="879.7" y="305.2" width="6.1" height="1.2" rx="0.5" fill="#222f3e"/><rect x="879.7" y="308.3" width="6.1" height="1.2" rx="0.5" fill="#222f3e"/><path d="M893.0999999999999 304.6 L895.6999999999999 307.20000000000005 L898.3 304.6" fill="none" stroke="#8f959c" stroke-width="0.8"/><path d="M905.3 303.3 H909 V306.2 Q909 308.2 906.6 308.8 L906.4 307.8 Q907.5 307.3 907.5 306.5 H905.3 Z M910.4 303.3 H914.1 V306.2 Q914.1 308.2 911.7 308.8 L911.5 307.8 Q912.6 307.3 912.6 306.5 H910.4 Z" fill="#222f3e"/><path d="M923.8 302.1 L929.2 307.6 M929.2 302.1 L923.8 307.6" fill="none" stroke="#222f3e" stroke-width="1.2"/><text x="930.2" y="309.8" font-family="Liberation Sans" font-weight="bold" font-size="5.2" fill="#222f3e">2</text><path d="M451.5 325.6 L456.7 332 M456.7 325.6 L451.5 332" fill="none" stroke="#222f3e" stroke-width="1.2"/><text x="457.3" y="327.6" font-family="Liberation Sans" font-weight="bold" font-size="5.2" fill="#222f3e">2</text><path d="M472.4 323.6 H478.4 M475.8 323.6 L474.2 330.4" fill="none" stroke="#222f3e" stroke-width="1.1"/><rect x="470.6" y="331.3" width="5" height="0.9" fill="#222f3e"/><path d="M476.5 329.6 L479.2 332.3 M479.2 329.6 L476.5 332.3" fill="none" stroke="#222f3e" stroke-width="0.8"/><path d="M510.1 347.9 L512.7 350.5 L515.3 347.9" fill="none" stroke="#8f959c" stroke-width="0.8"/><path d="M582.5 347.9 L585.1 350.5 L587.7 347.9" fill="none" stroke="#8f959c" stroke-width="0.8"/><path d="M655.3 347.9 L657.9 350.5 L660.5 347.9" fill="none" stroke="#8f959c" stroke-width="0.8"/><g fill="none" stroke="#222f3e" stroke-width="0.7"><rect x="669.35" y="345.75" width="8.1" height="7.1"/><path d="M669.4 347.9 H677.4 M669.4 349.7 H677.4 M669.4 351.4 H677.4 M672.1 345.8 V352.8 M674.8 345.8 V352.8" stroke-opacity=".75"/></g><rect x="669" y="345.4" width="8.8" height="1.2" fill="#222f3e"/><path d="M682.3 347.9 L684.9 350.5 L687.5 347.9" fill="none" stroke="#8f959c" stroke-width="0.8"/><rect x="696.5" y="345" width="8.8" height="8.6" rx="0.6" fill="none" stroke="#222f3e" stroke-width="1.2"/><path d="M697.2 352.5 L700 349.5 L701.5 350.8 L704.6 347.8 V352.6 Z" fill="#222f3e"/><circle cx="699.3" cy="347.6" r="0.9" fill="#222f3e"/><rect x="715.3" y="345" width="9" height="8.6" rx="0.6" fill="none" stroke="#222f3e" stroke-width="1.2"/><path d="M718.6 346.9 L722.4 349.3 L718.6 351.7 Z" fill="#222f3e"/><path d="M733.9 353.1 H737.3 V352.1 Q734.5 350.8 734.5 348.6 Q734.5 345.3 738.6 345.3 Q742.7 345.3 742.7 348.6 Q742.7 350.8 739.9 352.1 V353.1 H743.3" fill="none" stroke="#222f3e" stroke-width="1.1"/><circle cx="757.4" cy="349.3" r="4.1" fill="none" stroke="#222f3e" stroke-width="1"/><circle cx="755.9" cy="348" r="0.6" fill="#222f3e"/><circle cx="758.9" cy="348" r="0.6" fill="#222f3e"/><path d="M755 349.8 H759.8 Q759.6 352 757.4 352 Q755.2 352 755 349.8 Z" fill="#222f3e"/><rect x="772" y="348.8" width="9" height="1.1" fill="#222f3e"/><path d="M791.7 344 V347.8 H799.8 V344 M791.7 354.6 V351.2 H799.8 V354.6" fill="none" stroke="#222f3e" stroke-width="1.1"/><path d="M791.2 349.5 H800.4" stroke="#222f3e" stroke-width="0.9" stroke-dasharray="1.2 0.8"/><circle cx="814.45" cy="349.4" r="4.4" fill="none" stroke="#222f3e" stroke-width="1.1"/><path d="M814.3 346.6 V349.7 H816.8" fill="none" stroke="#222f3e" stroke-width="1"/><path d="M826.3 347.9 L828.9 350.5 L831.5 347.9" fill="none" stroke="#8f959c" stroke-width="0.8"/><path d="M839.3 344.8 H845.7 V346.6 H839.3 Z M837.7 347.2 H847.3 Q847.8 347.2 847.8 347.8 V351.6 H846 V353.7 H839 V351.6 H837.2 V347.8 Q837.2 347.2 837.7 347.2 Z" fill="#222f3e"/><rect x="839.9" y="350.3" width="5.2" height="2.6" fill="#fff"/><path d="M855.6 349.5 Q861.65 343.2 867.7 349.5 Q861.65 355.8 855.6 349.5 Z" fill="none" stroke="#222f3e" stroke-width="1.1"/><circle cx="861.65" cy="349.5" r="2" fill="#222f3e"/><circle cx="861" cy="348.8" r="0.6" fill="#fff"/><path d="M876.6 347.6 V345.3 H878.9 M882.2 345.3 H884.5 V347.6 M884.5 350.9 V353.2 H882.2 M878.9 353.2 H876.6 V350.9" fill="none" stroke="#222f3e" stroke-width="1.1"/><path d="M877 345.7 L879.2 347.9 M884.1 345.7 L881.9 347.9 M884.1 352.8 L881.9 350.6 M877 352.8 L879.2 350.6" stroke="#222f3e" stroke-width="0.9"/></svg>
<div class="a" style="left:451px;top:345.3px;font-size:7.8px;line-height:9.5px;color:#222f3e">段落</div>
<div class="a" style="left:524px;top:345.5px;font-size:7.8px;line-height:9.5px;color:#222f3e">Arial</div>
<div class="a" style="left:596.4px;top:345.5px;font-size:7.8px;line-height:9.5px;color:#222f3e">medium</div>
<div class="a" style="left:454px;top:369.8px;font-size:8.9px;line-height:21.8px;color:#333;white-space:nowrap">
<div style="height:21.8px;line-height:13.5px">1、会员生日当月可免费领取一份会员生日礼；</div>
<div style="height:21.8px;line-height:13.5px">2、推荐他人注册博阳互动会员，可获得100积分奖励；</div>
<div style="height:21.8px;line-height:13.5px">3、推荐他人关注博阳互动公众号，可获得50积分奖励；</div>
<div style="height:21.8px;line-height:13.5px">4、普通卡会员生日当日可获得1000生日积分；</div>
<div style="height:21.8px;line-height:13.5px">5、生日当月在商城或门店消费即可享积分翻倍权益。</div>
</div>
<div class="a" style="left:646px;top:501px;font-size:8.9px;line-height:11px;color:#111;font-weight:bold;white-space:nowrap">最终解释权归 博阳互动所有</div>
<svg class="a" style="left:840px;top:497px" width="34" height="34" viewBox="0 0 34 34">
  <path d="M16.2 3.8 A13.2 13.2 0 1 1 3.8 17.2" fill="none" stroke="#1d4f9f" stroke-width="3"/>
  <path d="M17 9.5 A7.5 7.5 0 1 0 23.5 20.75" fill="none" stroke="#72b440" stroke-width="2"/>
  <circle cx="18.1" cy="17" r="2.8" fill="#28a0e0"/>
</svg>
<div class="a" style="left:876px;top:499.5px;font-size:15.8px;line-height:18px;color:#6b6b6b;font-weight:300;letter-spacing:-0.3px;white-space:nowrap">博阳互动</div>
<div class="a" style="left:877px;top:519px;width:63px;height:0.8px;background:#aaa"></div>
<div class="a" style="left:878.5px;top:520.5px;font-size:7.1px;line-height:8px;color:#6b6b6b;letter-spacing:0.1px;white-space:nowrap">Beyond&nbsp; Marketing</div>
</body></html>
